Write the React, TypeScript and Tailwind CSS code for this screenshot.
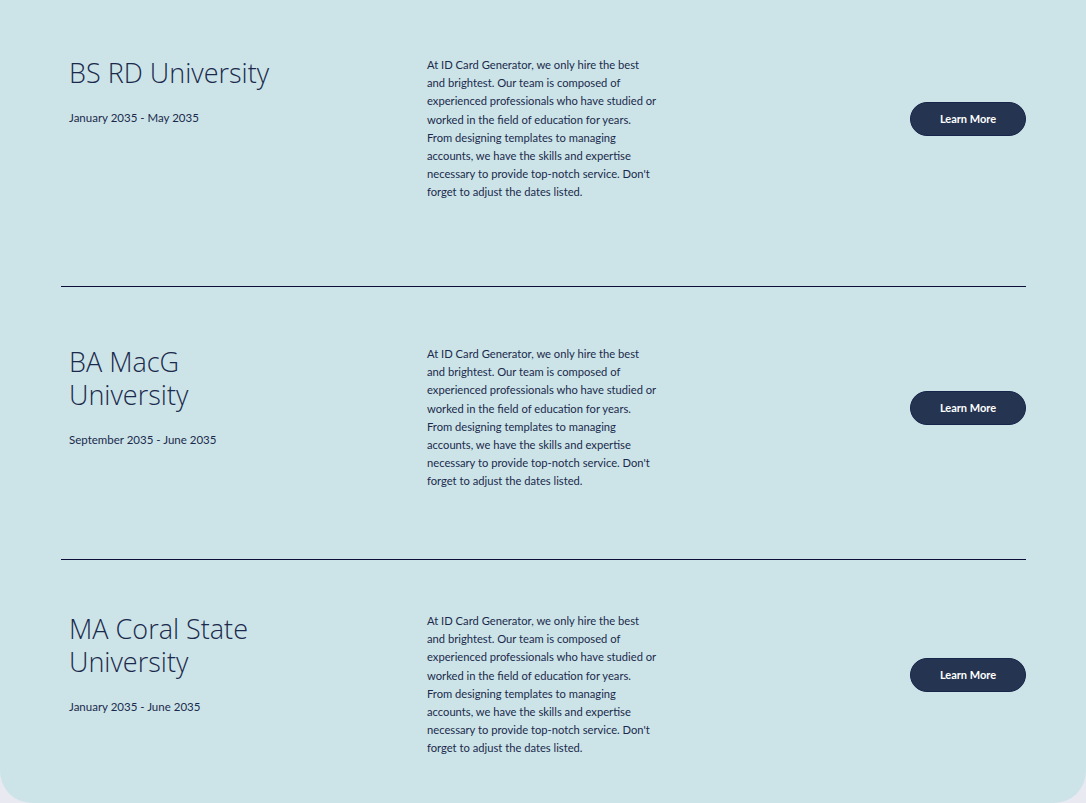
import React from "react";

// line breaks follow the original layout
const blurb = [
  "At ID Card Generator, we only hire the best",
  "and brightest. Our team is composed of",
  "experienced professionals who have studied or",
  "worked in the field of education for years.",
  "From designing templates to managing",
  "accounts, we have the skills and expertise",
  "necessary to provide top-notch service. Don't",
  "forget to adjust the dates listed.",
];

const rows = [
  { title: "BS RD University", dates: "January 2035 - May 2035", h: "h-[287px]", pt: "pt-[56px]" },
  { title: "BA MacG University", dates: "September 2035 - June 2035", h: "h-[273px]", pt: "pt-[58px]" },
  { title: "MA Coral State University", dates: "January 2035 - June 2035", h: "flex-1", pt: "pt-[52px]" },
];

const App = () => {
  return (
    <div className="min-h-screen bg-[#e9e9f2]">
      <div className="h-[803px] bg-[#cce4e8] rounded-b-[32px] flex flex-col pl-[61px] pr-[60px]">
        {rows.map((row, i) => (
          <div
            key={row.title}
            className={`${row.h} ${row.pt} flex items-start pl-2 ${i < rows.length - 1 ? "border-b border-[#0d0d3a]" : ""}`}
          >
            {/* Title + dates */}
            <div className="w-[358px] shrink-0">
              <h2 className="w-[215px] text-[27px] leading-[33px] text-[#1b2a4c] font-['Open_Sans',sans-serif] font-light">
                {row.title}
              </h2>
              <p className="mt-[21px] text-[11.5px] leading-[16px] text-[#1b2a4c] font-['Lato',sans-serif]">
                {row.dates}
              </p>
            </div>

            {/* Blurb */}
            <div className="w-[240px] text-[11.2px] leading-[18.2px] text-[#1b2a4c] font-['Lato',sans-serif]">
              {blurb.map((line) => (
                <p key={line} className="whitespace-nowrap">
                  {line}
                </p>
              ))}
            </div>

            {/* Button */}
            <div className="flex-1 flex justify-end">
              <button className="mt-[46px] w-[116px] h-[34px] rounded-full bg-[#253551] border border-[#17254a] text-white text-[11px] font-bold font-['Lato',sans-serif]">
                Learn More
              </button>
            </div>
          </div>
        ))}
      </div>
    </div>
  );
};

export default App;
